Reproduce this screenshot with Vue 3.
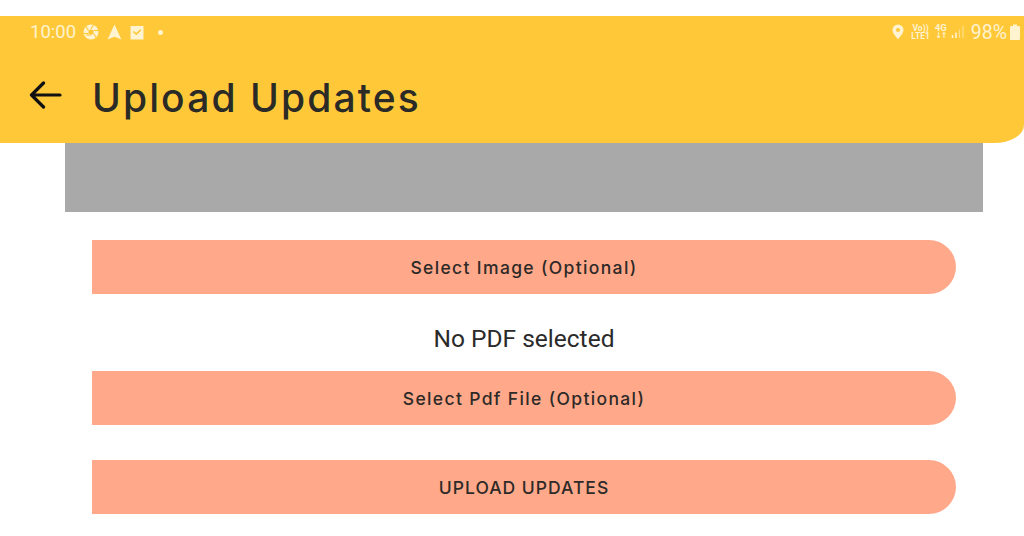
<script setup>
const buttons = {
  image: 'Select Image (Optional)',
  pdf: 'Select Pdf File (Optional)',
  upload: 'UPLOAD UPDATES'
}
</script>

<template>
  <div class="screen">
    <header class="app-bar">
      <div class="status-bar">
        <div class="status-left">
          <span class="clock">10:00</span>
          <svg class="status-icon" width="16" height="16" viewBox="0 0 16 16">
            <circle cx="8" cy="8" r="7.5" fill="#fff3d0" />
            <g stroke="#ffc839" stroke-width="1.1">
              <path d="M8 5 L10.5 .8" />
              <path d="M10.6 6.5 L15.4 6.5" />
              <path d="M10.6 9.5 L13.2 13.8" />
              <path d="M8 11 L3.2 11" />
              <path d="M5.4 9.5 L.8 9.5" />
              <path d="M5.4 6.5 L2.8 2.2" />
            </g>
            <circle cx="8" cy="8" r="2.6" fill="#ffc839" />
          </svg>
          <svg class="status-icon" width="15" height="16" viewBox="0 0 14 15">
            <path d="M7 .5 L13.5 14.5 L7 12 L.5 14.5 Z" fill="#fff3d0" />
          </svg>
          <svg class="status-icon" width="14" height="15" viewBox="0 0 14 15">
            <path d="M.5 1 H13.5 V14.5 H.5 Z" fill="#fff3d0" />
            <path d="M3.5 6.5 L6.2 9.2 L10.8 4.8" fill="none" stroke="#ffc839" stroke-width="1.6" />
          </svg>
          <span class="dot"></span>
        </div>
        <div class="status-right">
          <svg width="12" height="16" viewBox="0 0 12 16">
            <path fill-rule="evenodd" d="M6 .5 A5.5 5.5 0 0 1 11.5 6 C11.5 9.5 8 12.5 6 15.5 C4 12.5 .5 9.5 .5 6 A5.5 5.5 0 0 1 6 .5 Z M6 4 A2 2 0 1 0 6 8 A2 2 0 1 0 6 4 Z" fill="#fff3d0" />
          </svg>
          <div class="net-label vo">
            <span>Vo))</span>
            <span>LTE1</span>
          </div>
          <div class="net-label four-g">
            <span>4G</span>
            <span class="arrows">↓↑</span>
          </div>
          <svg class="signal" width="14" height="14" viewBox="0 0 14 14">
            <path d="M1.5 13 V10" stroke="#fff3d0" stroke-width="1.6" />
            <path d="M5 13 V7.5" stroke="#fff3d0" stroke-width="1.6" />
            <path d="M8.5 13 V4.5" stroke="#ffe08c" stroke-width="1.2" />
            <path d="M12 13 V1" stroke="#ffe08c" stroke-width="1.2" />
          </svg>
          <span class="battery-text">98%</span>
          <svg width="10" height="16" viewBox="0 0 10 16">
            <path d="M3 .5 H7 V2 H9 A1 1 0 0 1 10 3 V15 A1 1 0 0 1 9 16 H1 A1 1 0 0 1 0 15 V3 A1 1 0 0 1 1 2 H3 Z" fill="#fff3d0" />
          </svg>
        </div>
      </div>
      <div class="title-row">
        <svg class="back" width="34" height="28" viewBox="0 0 34 28">
          <path d="M32 14 H4 M15.5 2 L3.5 14 L15.5 26" fill="none" stroke="#111" stroke-width="3.2" stroke-linecap="round" stroke-linejoin="round" />
        </svg>
        <h1 class="title">Upload Updates</h1>
      </div>
    </header>

    <div class="preview"></div>

    <div class="actions">
      <button class="action">{{ buttons.image }}</button>
      <p class="pdf-state">No PDF selected</p>
      <button class="action">{{ buttons.pdf }}</button>
      <button class="action upload">{{ buttons.upload }}</button>
    </div>
  </div>
</template>

<style scoped>
.screen {
  width: 1024px;
  height: 536px;
  padding-top: 16px;
  box-sizing: border-box;
  background: #fff;
  overflow: hidden;
  font-family: "Inter", "Liberation Sans", sans-serif;
}

.app-bar {
  height: 127px;
  background: #ffc839;
  border-bottom-right-radius: 30px 18px;
  box-sizing: border-box;
}

.status-bar {
  display: flex;
  justify-content: space-between;
  align-items: center;
  height: 32px;
  padding: 0 4px 0 30px;
  color: #fff3d0;
  font-family: "Roboto", sans-serif;
}

.status-left,
.status-right {
  display: flex;
  align-items: center;
}

.clock {
  font-size: 18.5px;
  margin-right: 7px;
}

.status-icon {
  margin-right: 8px;
}

.dot {
  width: 5px;
  height: 5px;
  margin-left: 6px;
  border-radius: 50%;
  background: #fff3d0;
}

.net-label {
  display: flex;
  flex-direction: column;
  align-items: center;
  font-size: 8.5px;
  font-weight: 700;
  line-height: 8.5px;
}

.vo {
  margin-left: 7px;
}

.four-g {
  margin-left: 5px;
  font-size: 9.5px;
}

.arrows {
  font-family: "DejaVu Sans", sans-serif;
  font-size: 8px;
  letter-spacing: -1px;
}

.signal {
  margin-left: 4px;
}

.battery-text {
  font-size: 19.5px;
  margin: 0 3px 0 6px;
}

.title-row {
  display: flex;
  align-items: center;
  height: 95px;
  padding: 3px 0 0 28px;
  box-sizing: border-box;
}

.back {
  flex: none;
  margin-top: -4px;
}

.title {
  margin: 0 0 0 30px;
  font-size: 39px;
  font-weight: 500;
  letter-spacing: 2.1px;
  color: #2a2a26;
}

.preview {
  height: 69px;
  margin: 0 41px 0 65px;
  background: #a9a9a9;
}

.actions {
  display: flex;
  flex-direction: column;
  padding: 28px 68px 0 92px;
}

.action {
  height: 54px;
  padding: 1px 0 0;
  border: none;
  border-radius: 0 27px 27px 0;
  background: #ffa98a;
  color: #2d2a28;
  font-family: inherit;
  font-size: 17.5px;
  font-weight: 500;
  letter-spacing: 1.35px;
}

.pdf-state {
  margin: 0;
  height: 77px;
  line-height: 90px;
  text-align: center;
  font-family: "Roboto", sans-serif;
  font-size: 24.5px;
  color: #2a2a2a;
}

.upload {
  margin-top: 35px;
  letter-spacing: 1px;
}
</style>
